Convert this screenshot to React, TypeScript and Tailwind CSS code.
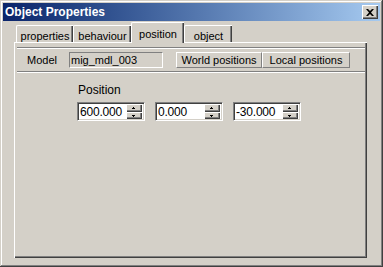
import React from 'react';

const FONT = { fontFamily: '"Liberation Sans", Arial, sans-serif' };

const raised =
  'bg-[#d4d0c8] shadow-[inset_1px_1px_#ffffff,inset_-1px_-1px_#404040,inset_-2px_-2px_#808080]';

const Spinner: React.FC = () => (
  <div className="flex flex-col w-[16px] h-[15px]">
    <div className={`${raised} h-[8px] flex items-center justify-center pr-[1px]`}>
      <svg width="3" height="2" viewBox="0 0 3 2">
        <path d="M1 0h1v1h1v1H0V1h1z" fill="#000" />
      </svg>
    </div>
    <div className={`${raised} h-[7px] flex items-center justify-center pr-[1px]`}>
      <svg width="3" height="2" viewBox="0 0 3 2">
        <path d="M0 0h3v1H2v1H1V1H0z" fill="#000" />
      </svg>
    </div>
  </div>
);

const NumField: React.FC<{ value: string }> = ({ value }) => (
  <div className="w-[68px] h-[19px] bg-white border border-t-[#808080] border-l-[#808080] border-r-white border-b-white shadow-[inset_1px_1px_#404040,inset_-1px_-1px_#d4d0c8] flex items-center pl-[2px] pr-[2px]">
    <span className="flex-1 text-[12px] leading-none text-black tracking-[-0.2px]">{value}</span>
    <Spinner />
  </div>
);

const tabs = [
  { label: 'properties', w: 'w-[57px]' },
  { label: 'behaviour', w: 'w-[58px]' },
  { label: 'position', w: 'w-[53px]', active: true },
  { label: 'object', w: 'w-[48px]' },
];

const App: React.FC = () => {
  return (
    <div
      style={FONT}
      className="w-[383px] h-[267px] bg-[#d4d0c8] p-[3px] flex flex-col shadow-[inset_-1px_-1px_#404040,inset_1px_1px_#d4d0c8,inset_-2px_-2px_#808080,inset_2px_2px_#ffffff]"
    >
      {/* title bar */}
      <div className="h-[18px] bg-gradient-to-r from-[#0a246a] to-[#a6caf0] flex items-center justify-between pl-[2px] pr-[2px]">
        <span className="text-white font-bold text-[12px] leading-none">Object Properties</span>
        <div className={`${raised} w-[16px] h-[14px] flex items-center justify-center`}>
          <svg width="8" height="7" viewBox="0 0 8 7">
            <path d="M0 0h2l2 2 2-2h2L5 3.5 8 7H6L4 5 2 7H0l3-3.5z" fill="#000" />
          </svg>
        </div>
      </div>

      {/* tabs */}
      <div className="mt-[1px] h-[20px] flex items-end pl-[13px]">
        {tabs.map((t) =>
          t.active ? (
            <div
              key={t.label}
              className={`${t.w} h-[21px] -mb-px relative z-10 bg-[#d4d0c8] border-t border-l border-white rounded-tl-[2px] shadow-[inset_-1px_0_#404040,inset_-2px_0_#808080] flex items-start justify-center pt-[3px] text-[11px] text-black`}
            >
              {t.label}
            </div>
          ) : (
            <div
              key={t.label}
              className={`${t.w} h-[17px] bg-[#d4d0c8] border-t border-l border-white rounded-tl-[2px] shadow-[inset_-1px_0_#404040,inset_-2px_0_#808080] flex items-start justify-center pt-[2px] text-[11px] text-black`}
            >
              {t.label}
            </div>
          )
        )}
      </div>

      {/* panel */}
      <div className="ml-[11px] w-[353px] h-[216px] bg-[#d4d0c8] border-t border-l border-white shadow-[inset_-1px_-1px_#404040,inset_-2px_-2px_#808080] pt-[4px] px-[2px] text-[11px] text-black">
        <div className="h-[2px] border-t border-[#808080] border-b border-b-white" />
        <div className="mt-[3px] h-[16px] flex items-center">
          <span className="ml-[10px] w-[42px]">Model</span>
          <div className="w-[94px] h-[16px] border border-t-[#808080] border-l-[#808080] border-r-white border-b-white flex items-center pl-[1px]">
            mig_mdl_003
          </div>
          <div className="ml-[13px] flex">
            <div className="w-[86px] h-[16px] border border-t-white border-l-white border-r-[#808080] border-b-[#808080] flex items-center justify-center">
              World positions
            </div>
            <div className="w-[88px] h-[16px] border border-t-white border-l-white border-r-[#808080] border-b-[#808080] flex items-center justify-center">
              Local positions
            </div>
          </div>
        </div>
        <div className="mt-[3px] h-[2px] border-t border-[#808080] border-b border-b-white" />

        <div className="mt-[11px] ml-[61px] text-[12px] leading-[13px]">Position</div>
        <div className="mt-[5px] ml-[60px] flex gap-[10px]">
          <NumField value="600.000" />
          <NumField value="0.000" />
          <NumField value="-30.000" />
        </div>
      </div>
    </div>
  );
};

export default App;
